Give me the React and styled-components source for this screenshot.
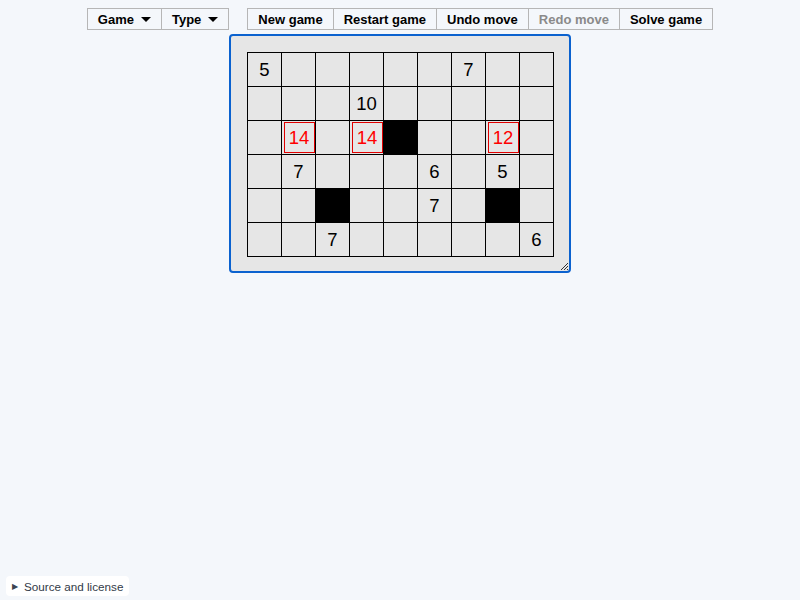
import React from "react";
import styled, { createGlobalStyle } from "styled-components";

const GlobalStyle = createGlobalStyle`
  html, body {
    margin: 0;
    padding: 0;
    background: #f4f7fb;
    font-family: "Liberation Sans", Arial, sans-serif;
  }
`;

// 9 x 6 board: number, "#" for a black cell, "!n" for a flagged (red) clue
const board = [
  ["5", "", "", "", "", "", "7", "", ""],
  ["", "", "", "10", "", "", "", "", ""],
  ["", "!14", "", "!14", "#", "", "", "!12", ""],
  ["", "7", "", "", "", "6", "", "5", ""],
  ["", "", "#", "", "", "7", "", "#", ""],
  ["", "", "7", "", "", "", "", "", "6"],
];

const App = () => {
  return (
    <Page>
      <GlobalStyle />
      <MenuBar>
        <Group>
          <MenuButton>
            Game <Caret />
          </MenuButton>
          <MenuButton>
            Type <Caret />
          </MenuButton>
        </Group>
        <Group>
          <MenuButton>New game</MenuButton>
          <MenuButton>Restart game</MenuButton>
          <MenuButton>Undo move</MenuButton>
          <MenuButton disabled>Redo move</MenuButton>
          <MenuButton>Solve game</MenuButton>
        </Group>
      </MenuBar>

      <Frame>
        <Grid>
          {board.flat().map((value, i) => {
            if (value === "#") return <Cell key={i} $black />;
            if (value.startsWith("!"))
              return (
                <Cell key={i}>
                  <Flagged>{value.slice(1)}</Flagged>
                </Cell>
              );
            return <Cell key={i}>{value}</Cell>;
          })}
        </Grid>
        <Grip width="10" height="10" viewBox="0 0 10 10">
          <path d="M9 2 L2 9 M9 5 L5 9 M9 8 L8 9" stroke="#333" strokeWidth="1" />
        </Grip>
      </Frame>

      <Footer>
        <Details>
          <Arrow>▶</Arrow>
          Source and license
        </Details>
      </Footer>
    </Page>
  );
};

const Page = styled.div`
  min-height: 100vh;
  display: flex;
  flex-direction: column;
  align-items: center;
  padding-top: 8px;
  box-sizing: border-box;
`;

const MenuBar = styled.div`
  display: flex;
  gap: 18px;
`;

const Group = styled.div`
  display: flex;
`;

const MenuButton = styled.button`
  height: 22px;
  padding: 0 10px;
  margin-left: -1px;
  border: 1px solid #b6b6b6;
  border-radius: 0;
  background: #f4f7fb;
  color: ${(p) => (p.disabled ? "#8a8a8a" : "#000")};
  font-family: "Liberation Sans", Arial, sans-serif;
  font-weight: bold;
  font-size: 13px;
  display: flex;
  align-items: center;
  gap: 7px;
  &:first-child {
    margin-left: 0;
  }
`;

const Caret = styled.span`
  width: 0;
  height: 0;
  border-left: 5px solid transparent;
  border-right: 5px solid transparent;
  border-top: 5px solid #000;
  margin-top: 1px;
`;

const Frame = styled.div`
  position: relative;
  margin-top: 4px;
  width: 342px;
  height: 239px;
  box-sizing: border-box;
  border: 2px solid #0b62cf;
  border-radius: 4px;
  background: #e6e6e6;
  padding: 16px 0 0 16px;
`;

const Grid = styled.div`
  display: grid;
  grid-template-columns: repeat(9, 34px);
  grid-auto-rows: 34px;
  width: max-content;
  border-top: 1px solid #000;
  border-left: 1px solid #000;
`;

const Cell = styled.div`
  box-sizing: border-box;
  border-right: 1px solid #000;
  border-bottom: 1px solid #000;
  background: ${(p) => (p.$black ? "#000" : "#e6e6e6")};
  display: flex;
  align-items: center;
  justify-content: center;
  font-size: 18.5px;
  color: #000;
  padding-top: 1px;
`;

const Flagged = styled.div`
  box-sizing: border-box;
  width: 31px;
  height: 31px;
  margin: 0 0 1px 1px;
  border: 1px solid #e00000;
  color: #ff0000;
  display: flex;
  align-items: center;
  justify-content: center;
`;

const Grip = styled.svg`
  position: absolute;
  right: 0;
  bottom: 0;
`;

const Footer = styled.div`
  margin-top: auto;
  align-self: stretch;
  padding: 0 0 4px 6px;
`;

const Details = styled.div`
  display: inline-flex;
  align-items: center;
  gap: 6px;
  height: 20px;
  padding: 0 6px;
  background: #fff;
  border-radius: 4px;
  font-size: 11.7px;
  color: #333b48;
`;

const Arrow = styled.span`
  font-size: 8px;
  color: #3c4450;
`;

export default App;
